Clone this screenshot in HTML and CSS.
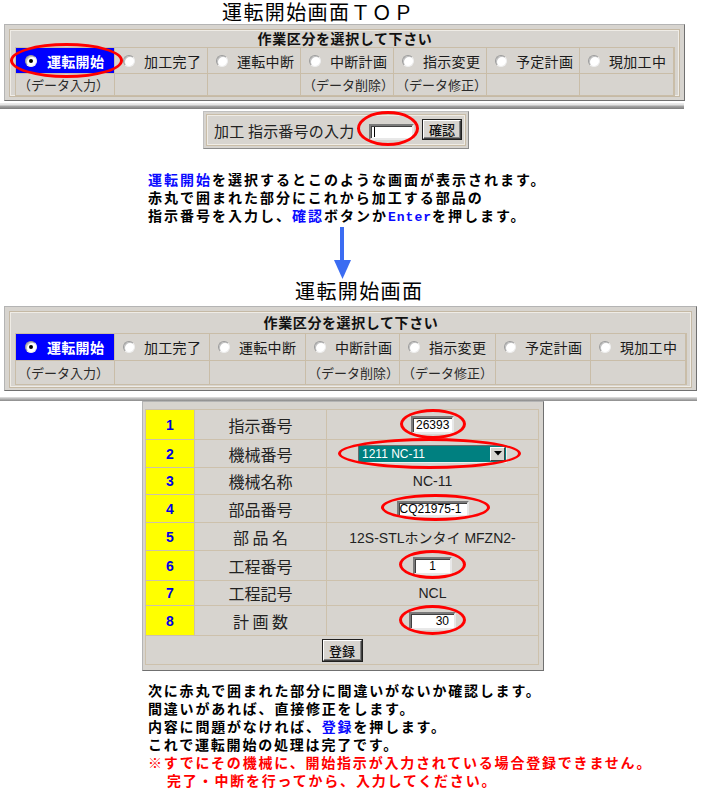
FILE: index.html
```html
<!DOCTYPE html>
<html lang="ja">
<head>
<meta charset="utf-8">
<title>運転開始画面</title>
<link rel="stylesheet" href="styles.css">
</head>
<body>
<h1 class="title t1">運転開始画面ＴＯＰ</h1>

<div class="panel p1">
  <div class="frame">
    <div class="hdr">作業区分を選択して下さい</div>
    <div class="grid g1">
      <div class="cell sel"><span class="radio on"></span><span>運転開始</span></div>
      <div class="cell"><span class="radio"></span><span>加工完了</span></div>
      <div class="cell"><span class="radio"></span><span>運転中断</span></div>
      <div class="cell"><span class="radio"></span><span>中断計画</span></div>
      <div class="cell"><span class="radio"></span><span>指示変更</span></div>
      <div class="cell"><span class="radio"></span><span>予定計画</span></div>
      <div class="cell"><span class="radio"></span><span>現加工中</span></div>
      <div class="sub">（データ入力）</div>
      <div class="sub"></div>
      <div class="sub"></div>
      <div class="sub">（データ削除）</div>
      <div class="sub">（データ修正）</div>
      <div class="sub"></div>
      <div class="sub"></div>
    </div>
  </div>
  <span class="ring ring-sel"></span>
</div>
<div class="band band1"></div>

<div class="panel small">
  <div class="small-frame">
    <span class="small-label">加工 指示番号の入力</span>
    <span class="input in-top"><span class="caret"></span></span>
    <span class="btn btn-ok">確認</span>
  </div>
  <span class="ring ring-top"></span>
</div>

<div class="para para1">
  <div><span class="blue">運転開始</span>を選択するとこのような画面が表示されます。</div>
  <div>赤丸で囲まれた部分にこれから加工する部品の</div>
  <div>指示番号を入力し、<span class="blue">確認</span>ボタンか<span class="blue mono">Enter</span>を押します。</div>
</div>

<div class="arrow">
  <svg width="17" height="52" viewBox="0 0 17 52">
    <rect x="6" y="0" width="4" height="34" fill="#3b6cf2"/>
    <polygon points="0,33 17,33 8.5,52" fill="#3b6cf2"/>
  </svg>
</div>

<h1 class="title t2">運転開始画面</h1>

<div class="panel p2">
  <div class="frame">
    <div class="hdr">作業区分を選択して下さい</div>
    <div class="grid g2">
      <div class="cell sel"><span class="radio on"></span><span>運転開始</span></div>
      <div class="cell"><span class="radio"></span><span>加工完了</span></div>
      <div class="cell"><span class="radio"></span><span>運転中断</span></div>
      <div class="cell"><span class="radio"></span><span>中断計画</span></div>
      <div class="cell"><span class="radio"></span><span>指示変更</span></div>
      <div class="cell"><span class="radio"></span><span>予定計画</span></div>
      <div class="cell"><span class="radio"></span><span>現加工中</span></div>
      <div class="sub">（データ入力）</div>
      <div class="sub"></div>
      <div class="sub"></div>
      <div class="sub">（データ削除）</div>
      <div class="sub">（データ修正）</div>
      <div class="sub"></div>
      <div class="sub"></div>
    </div>
  </div>
</div>
<div class="band band2"></div>

<div class="panel form">
  <div class="fgrid">
    <div class="num">1</div><div class="lbl">指示番号</div><div class="val"><span class="input in1">26393</span></div>
    <div class="num">2</div><div class="lbl">機械番号</div><div class="val"><span class="select"><span class="sel-text">1211 NC-11</span><span class="sel-btn"><svg width="8" height="5" viewBox="0 0 8 5"><polygon points="0,0 8,0 4,4.5" fill="#000"/></svg></span></span></div>
    <div class="num">3</div><div class="lbl">機械名称</div><div class="val">NC-11</div>
    <div class="num">4</div><div class="lbl">部品番号</div><div class="val"><span class="input in4">CQ21975-1</span></div>
    <div class="num">5</div><div class="lbl">部 品 名</div><div class="val">12S-STLホンタイ MFZN2-</div>
    <div class="num">6</div><div class="lbl">工程番号</div><div class="val"><span class="input in6">1</span></div>
    <div class="num">7</div><div class="lbl">工程記号</div><div class="val">NCL</div>
    <div class="num">8</div><div class="lbl">計 画 数</div><div class="val"><span class="input in8">30</span></div>
    <div class="btnrow"><span class="btn btn-reg">登録</span></div>
  </div>
  <span class="ring r1"></span>
  <span class="ring r2"></span>
  <span class="ring r4"></span>
  <span class="ring r6"></span>
  <span class="ring r8"></span>
</div>

<div class="para para2">
  <div>次に赤丸で囲まれた部分に間違いがないか確認します。</div>
  <div>間違いがあれば、直接修正をします。</div>
  <div>内容に問題がなければ、<span class="blue">登録</span>を押します。</div>
  <div>これで運転開始の処理は完了です。</div>
  <div class="red">※すでにその機械に、開始指示が入力されている場合登録できません。</div>
  <div class="red indent">完了・中断を行ってから、入力してください。</div>
</div>
</body>
</html>
```

FILE: styles.css
```css
* { box-sizing: border-box; }

body {
  margin: 0;
  width: 702px;
  background: #ffffff;
  font-family: "Noto Sans CJK JP", "Liberation Sans", sans-serif;
  color: #111;
}

.title {
  margin: 0;
  font-weight: 400;
  font-size: 20px;
  letter-spacing: 1.4px;
  color: #000;
  white-space: nowrap;
}
.t1 { height: 24px; line-height: 23px; padding-left: 222px; }
.t2 { margin-top: 2px; height: 25px; line-height: 20px; padding-left: 295px; }

/* gray windows-like panels */
.panel {
  position: relative;
  background: #d7d4cf;
  border: 1px solid;
  border-color: #b4b4b4 #707070 #707070 #b4b4b4;
  margin-left: 4px;
}
.frame {
  border: 1px solid #c5b9a5;
  box-shadow: inset 0 0 0 1px #efece6;
  padding: 0 4px 0 5px;
}

.p1 { width: 681px; padding: 4px 4px 3px 4px; }
.p2 { width: 693px; padding: 4px 4px 2px 4px; }
.p2 .frame { padding-bottom: 2px; }

.hdr {
  text-align: center;
  font-weight: 700;
  font-size: 14px;
  color: #111;
  letter-spacing: 0.6px;
  white-space: nowrap;
}
.p1 .hdr { height: 17px; line-height: 17px; }
.p2 .hdr { height: 21px; line-height: 21px; }

.grid {
  display: grid;
  gap: 1px;
  background: #c9bda8;
  border: 1px solid #c9bda8;
}
.g1 {
  grid-template-columns: 98px 92px 92px 92px 92px 92px 93px;
  grid-template-rows: 25px 21px;
}
.g2 {
  grid-template-columns: 98px 94px 95px 93px 95px 94px 94px;
  grid-template-rows: 26px 23px;
}

.cell {
  background: #d7d4cf;
  display: flex;
  align-items: center;
  gap: 9px;
  padding-left: 8px;
  font-size: 14px;
  color: #1a1a1a;
  white-space: nowrap;
  letter-spacing: 0.3px;
}
.cell.sel {
  background: #0000ff;
  color: #ffffff;
  font-weight: 700;
  padding-left: 9px;
  gap: 10px;
}
.sub {
  background: #d7d4cf;
  display: flex;
  align-items: center;
  padding-left: 2px;
  font-size: 13px;
  color: #2a2a2a;
  white-space: nowrap;
}

.radio {
  flex: none;
  position: relative;
  width: 12px;
  height: 12px;
  border-radius: 50%;
  background: #ffffff;
  border: 1px solid;
  border-color: #9a9a9a #eeeeee #eeeeee #9a9a9a;
  box-shadow: inset 1px 1px 0 #c0c0c0;
}
.radio.on::after {
  content: "";
  position: absolute;
  left: 3px;
  top: 3px;
  width: 4px;
  height: 4px;
  border-radius: 50%;
  background: #000;
}

.band {
  height: 6px;
  background: linear-gradient(#ececec 0, #e2e2e2 2px, #a8a8a8 3px, #7c7c7c 6px);
}
.band1 { margin-top: 2px; width: 684px; }
.band2 { margin-top: 6px; width: 697px; height: 4px; background: linear-gradient(#e6e6e6 0, #c8c8c8 1px, #8a8a8a 4px); }

/* small input panel */
.small {
  margin-top: 2px;
  margin-left: 203px;
  width: 266px;
  height: 38px;
  padding: 2px;
  border-color: #c0c0c0 #8c8c8c #8c8c8c #c0c0c0;
}
.small-frame {
  height: 100%;
  border: 1px solid #c9bda8;
  box-shadow: inset 0 0 0 1px #efece6;
  display: flex;
  align-items: center;
  padding-left: 7px;
}
.small-label {
  width: 155px;
  font-size: 15px;
  color: #222;
  white-space: nowrap;
  letter-spacing: 0.2px;
}
.input {
  display: inline-flex;
  align-items: center;
  background: #ffffff;
  border: 2px solid;
  border-color: #7a7a7a #e8e8e8 #e8e8e8 #7a7a7a;
  box-shadow: inset 1px 1px 0 #404040;
  font-family: "Liberation Sans", sans-serif;
  font-size: 12px;
  color: #000;
  padding-left: 3px;
  white-space: nowrap;
}
.in-top { width: 45px; height: 16px; margin-top: 4px; }
.caret { width: 1px; height: 10px; background: #000; }

.btn {
  display: inline-flex;
  align-items: center;
  justify-content: center;
  background: #d7d4cf;
  border: 1px solid;
  border-color: #ffffff #404040 #404040 #ffffff;
  box-shadow: inset -1px -1px 0 #808080, 0 0 0 1px #202020;
  font-size: 13px;
  font-weight: 500;
  color: #111;
}
.btn-ok { width: 38px; height: 19px; margin-left: 9px; margin-top: -1px; }

.ring {
  position: absolute;
  border: 3px solid #ff0000;
  border-radius: 50%;
  pointer-events: none;
}
.ring-sel { left: 5px; top: 18px; width: 113px; height: 35px; }
.ring-top { left: 153px; top: -1px; width: 62px; height: 35px; }

/* paragraphs */
.para {
  margin-left: 148px;
  font-size: 14px;
  font-weight: 700;
  line-height: 18px;
  letter-spacing: 2px;
  color: #000;
  white-space: nowrap;
}
.para1 { margin-top: 21px; }
.para2 { margin-top: 10px; letter-spacing: 1.8px; }
.blue { color: #0a0aff; }
.mono { font-family: "Liberation Mono", monospace; font-size: 13px; letter-spacing: 1px; }
.red { color: #ff0000; }
.indent { padding-left: 19px; }

.arrow { margin-left: 334px; height: 52px; }
.arrow svg { display: block; }

/* form table */
.form {
  margin-left: 142px;
  width: 402px;
  height: 270px;
  padding: 7px 4px 5px 2px;
}
.fgrid {
  display: grid;
  grid-template-columns: 48px 131px 211px;
  grid-template-rows: 29px 27px 26px 27px 27px 29px 24px 29px 28px;
  gap: 1px;
  background: #cdc1ac;
  border: 1px solid #cdc1ac;
}
.fgrid > div { background: #d7d4cf; display: flex; align-items: center; justify-content: center; white-space: nowrap; }
.fgrid > .num {
  background: #ffff00;
  font-family: "Liberation Sans", sans-serif;
  font-weight: 700;
  font-size: 14px;
  color: #0000e6;
}
.fgrid > .lbl { font-size: 16px; color: #222; }
.fgrid > .val { font-family: "Liberation Sans", "Noto Sans CJK JP", sans-serif; font-size: 14px; color: #222; }
.fgrid > .btnrow { grid-column: 1 / 4; }

.in1 { width: 43px; height: 18px; }
.in4 { width: 72px; height: 16px; padding-left: 1px; }
.in6 { width: 39px; height: 18px; justify-content: center; padding-left: 0; }
.in8 { width: 47px; height: 18px; justify-content: flex-end; padding-right: 5px; }

.select {
  display: inline-flex;
  align-items: center;
  width: 149px;
  height: 18px;
  background: #008080;
  border: 1px solid;
  border-color: #6a6a6a #f0f0f0 #f0f0f0 #6a6a6a;
  font-family: "Liberation Sans", sans-serif;
  font-size: 12px;
  color: #ffffff;
  padding-left: 3px;
}
.sel-text { flex: 1; }
.sel-btn {
  width: 15px;
  height: 14px;
  margin-right: 1px;
  background: #d7d4cf;
  border: 1px solid;
  border-color: #ffffff #404040 #404040 #ffffff;
  display: flex;
  align-items: center;
  justify-content: center;
}
.sel-btn svg { display: block; }

.btn-reg { width: 39px; height: 21px; font-size: 13px; }

.r1 { left: 257px; top: 7px; width: 66px; height: 30px; }
.r2 { left: 195px; top: 36px; width: 183px; height: 31px; }
.r4 { left: 238px; top: 92px; width: 109px; height: 27px; }
.r6 { left: 256px; top: 148px; width: 67px; height: 29px; }
.r8 { left: 256px; top: 203px; width: 67px; height: 30px; }
```
